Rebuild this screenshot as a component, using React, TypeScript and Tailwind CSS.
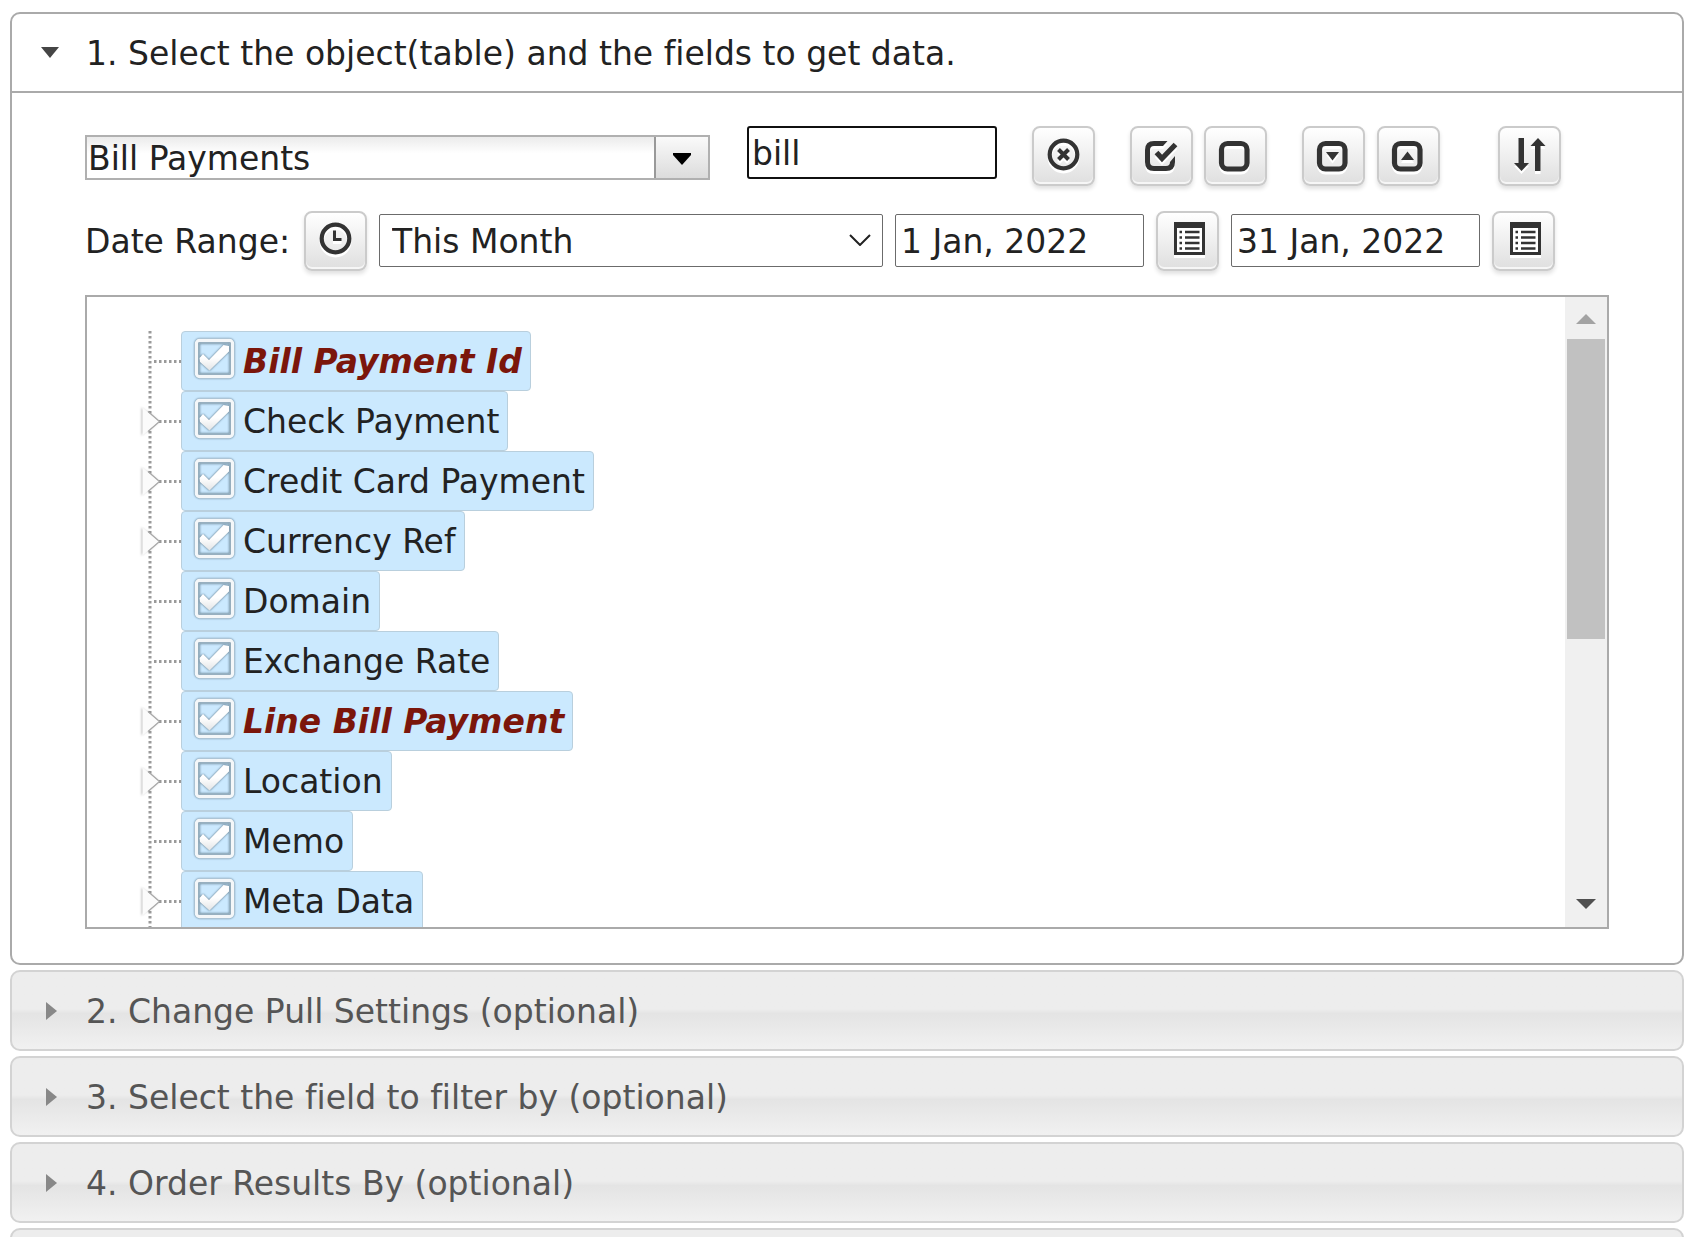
import React, { useState } from 'react';

interface Field {
  name: string;
  expandable?: boolean;
  key?: boolean;
}

const fields: Field[] = [
  { name: 'Bill Payment Id', key: true },
  { name: 'Check Payment', expandable: true },
  { name: 'Credit Card Payment', expandable: true },
  { name: 'Currency Ref', expandable: true },
  { name: 'Domain' },
  { name: 'Exchange Rate' },
  { name: 'Line Bill Payment', expandable: true, key: true },
  { name: 'Location', expandable: true },
  { name: 'Memo' },
  { name: 'Meta Data', expandable: true },
];

const sections = [
  '2. Change Pull Settings (optional)',
  '3. Select the field to filter by (optional)',
  '4. Order Results By (optional)',
];

interface IconButtonProps {
  label: string;
  className?: string;
  children: React.ReactNode;
}

function IconButton({ label, className = '', children }: IconButtonProps) {
  return (
    <button
      type="button"
      aria-label={label}
      className={`h-[60px] w-[63px] shrink-0 rounded-lg border-2 border-[#cbcbcb] bg-linear-to-b from-white to-[#dfdfdf] shadow-[inset_0_-2px_0_#f6f6f6,0_3px_4px_rgba(0,0,0,0.12)] ${className}`}
    >
      <svg viewBox="0 0 59 56" className="block h-full w-full drop-shadow-[0_3px_0_#ffffff]" fill="none" stroke="#333333">
        {children}
      </svg>
    </button>
  );
}

function CalendarIcon() {
  return (
    <>
      <path d="M17.5 12V40.5H45.5V12" strokeWidth="3" fill="#ffffff" />
      <path d="M16 9H47V15H16Z" fill="#333333" stroke="none" />
      <path d="M21.5 19H24M21.5 24.5H24M21.5 30H24M21.5 35.5H24M27 19H41.5M27 24.5H41.5M27 30H41.5M27 35.5H41.5" strokeWidth="2.6" />
    </>
  );
}

function RoundedBox() {
  return <rect x="15.5" y="15.5" width="25.5" height="25.5" rx="6" strokeWidth="5.2" />;
}

function TreeRow({ field }: { field: Field }) {
  const [checked, setChecked] = useState(true);

  return (
    <li className="flex h-[60px]">
      <div className="relative w-[41px] shrink-0">
        <svg viewBox="0 0 41 60" className="h-full w-full" fill="none" stroke="#9a9a9a" strokeWidth="3" strokeDasharray="2.5 2.5">
          <path d="M10 0V60" />
          <path d="M14 30.5H41" />
        </svg>
        {field.expandable && (
          <button type="button" aria-label={`Expand ${field.name}`} className="absolute top-[15px] left-0 h-8 w-5">
            <svg viewBox="0 0 20 32" className="h-full w-full overflow-visible drop-shadow-[-1px_0_1px_rgba(0,0,0,0.25)]">
              <path d="M2.5 1.5L19 15.5L2.5 29.5Z" fill="#fbfbfb" />
              <path d="M8 5.5L19.5 15.5L8 25.5" fill="none" stroke="#a8a8a8" strokeWidth="1.2" />
            </svg>
          </button>
        )}
      </div>
      <label className="flex h-[60px] items-center rounded border border-[#b9cfdd] bg-[#cbe9fe] pr-2 pl-3">
        <span className="relative mr-2 mb-[5px] block h-[41px] w-[41px] shrink-0">
          <input
            type="checkbox"
            checked={checked}
            onChange={() => setChecked(!checked)}
            className="absolute inset-0 h-full w-full appearance-none"
          />
          <svg viewBox="0 0 41 41" className="pointer-events-none absolute inset-0 h-full w-full drop-shadow-[0_0_1px_rgba(50,80,100,0.85)]" fill="none">
            <defs>
              <linearGradient id="tick" x1="0" y1="0" x2="0" y2="1">
                <stop offset="0.5" stopColor="#ffffff" />
                <stop offset="1" stopColor="#e2e4e6" />
              </linearGradient>
            </defs>
            <rect x="2.5" y="2.5" width="36" height="36" rx="3" stroke="#f4f7f9" strokeWidth="3.4" />
            <rect x="5" y="5" width="31" height="31" stroke="#9db6c5" strokeWidth="1.2" />
            {checked && (
              <path d="M5.5 20L9 16L15 22L29.5 7L35 8V13.5L15.5 32.5L6 24Z" fill="url(#tick)" />
            )}
          </svg>
        </span>
        <span className={field.key ? 'pt-[2px] font-bold text-[#7b160b] italic' : 'pt-[2px]'}>{field.name}</span>
      </label>
    </li>
  );
}

export default function App() {
  const [range, setRange] = useState('This Month');

  return (
    <main className="flex h-screen flex-col gap-[5px] overflow-hidden bg-white pt-3 pr-[11px] pl-[10px] font-['Verdana','DejaVu_Sans',sans-serif] text-[33px] leading-[40px] whitespace-nowrap text-[#222222] [font-variant-ligatures:none]">
      <section className="shrink-0 rounded-[10px] border-2 border-[#aaaaaa]">
        <h2 className="border-b-2 border-[#aaaaaa]">
          <button type="button" aria-expanded="true" className="flex h-[77px] w-full items-center">
            <svg viewBox="0 0 20 12" className="mr-[26px] ml-7 h-3 w-5" fill="#454545">
              <path d="M1 0H19L10 11Z" />
            </svg>
            <span className="pt-[2px]">1. Select the object(table) and the fields to get data.</span>
          </button>
        </h2>

        <div className="pt-[33px] pr-[73px] pb-[34px] pl-[73px]">
          <div className="flex">
            <div className="mt-[9px] mr-[37px] flex h-[45px] w-[625px] border-2 border-[#b0b0b0]">
              <input
                type="text"
                aria-label="Object"
                defaultValue="Bill Payments"
                className="min-w-0 flex-1 bg-linear-to-b from-[#ebebeb] to-white to-40% pt-[2px] pl-px outline-none"
              />
              <button
                type="button"
                aria-label="Show objects"
                className="flex w-[54px] items-center justify-center border-l-2 border-[#999999] bg-linear-to-b from-[#fafafa] to-[#dcdcdc] pt-[2px]"
              >
                <svg viewBox="0 0 18 12" className="h-3 w-[18px]" fill="#000000">
                  <path d="M0 0H18V2L9 12L0 2Z" />
                </svg>
              </button>
            </div>
            <input
              type="text"
              aria-label="Search fields"
              defaultValue="bill"
              className="mr-[35px] h-[53px] w-[250px] rounded-[3px] border-2 border-[#101010] pt-[2px] pl-[3px] outline-none"
            />
            <IconButton label="Clear search">
              <circle cx="29.5" cy="26.5" r="13.8" strokeWidth="4.2" />
              <path d="M24.5 21.5L34.5 31.5M34.5 21.5L24.5 31.5" strokeWidth="4" />
            </IconButton>
            <IconButton label="Check all" className="mr-[11px] ml-[35px]">
              <path
                d="M35.5 13L31 18H22Q18 18 18 22V34Q18 38 22 38H34Q38 38 38 34L43 28V34Q43 43 34 43H22Q13 43 13 34V22Q13 13 22 13Z"
                fill="#333333"
                stroke="none"
              />
              <path d="M24.5 24.5L30 30.5L43.5 16.5" strokeWidth="5.2" />
            </IconButton>
            <IconButton label="Uncheck all">
              <RoundedBox />
            </IconButton>
            <IconButton label="Expand all" className="mr-3 ml-[35px]">
              <RoundedBox />
              <path d="M22 24H35L28.5 32.5Z" fill="#333333" stroke="none" />
            </IconButton>
            <IconButton label="Collapse all">
              <RoundedBox />
              <path d="M22 32H35L28.5 23.5Z" fill="#333333" stroke="none" />
            </IconButton>
            <IconButton label="Sort" className="ml-[58px]">
              <path
                d="M18.5 10H24V35H29L21.5 43L14 35H18.5ZM35 43H40.5V18H45.5L38 10L30.5 18H35Z"
                fill="#333333"
                stroke="none"
              />
            </IconButton>
          </div>

          <div className="mt-[25px] flex items-start gap-3">
            <label htmlFor="range" className="mt-[11px] w-[207px]">Date Range:</label>
            <IconButton label="Refresh range">
              <circle cx="29.5" cy="25.5" r="13.8" strokeWidth="4.2" />
              <path d="M28.5 17.5V26.5H35.5" strokeWidth="3" />
            </IconButton>
            <div className="relative mt-[3px] h-[53px] w-[504px]">
              <select
                id="range"
                value={range}
                onChange={(e) => setRange(e.target.value)}
                className="h-full w-full appearance-none rounded-xs border border-[#6b6b6b] bg-white pt-[2px] pl-3"
              >
                <option>This Month</option>
              </select>
              <svg viewBox="0 0 22 12" className="pointer-events-none absolute top-5 right-3 h-3 w-[22px]" fill="none" stroke="#222222" strokeWidth="2">
                <path d="M1 1L11 11L21 1" />
              </svg>
            </div>
            <input
              type="text"
              aria-label="Start date"
              defaultValue="1 Jan, 2022"
              className="mt-[3px] h-[53px] w-[249px] rounded-xs border border-[#6b6b6b] pt-[2px] pl-[5px]"
            />
            <IconButton label="Pick start date">
              <CalendarIcon />
            </IconButton>
            <input
              type="text"
              aria-label="End date"
              defaultValue="31 Jan, 2022"
              className="mt-[3px] h-[53px] w-[249px] rounded-xs border border-[#6b6b6b] pt-[2px] pl-[5px]"
            />
            <IconButton label="Pick end date">
              <CalendarIcon />
            </IconButton>
          </div>

          <div className="mt-6 flex h-[634px] overflow-hidden border-2 border-[#aaaaaa]">
            <ul className="min-w-0 flex-1 pt-[34px] pl-[53px]">
              {fields.map((field) => (
                <TreeRow key={field.name} field={field} />
              ))}
            </ul>
            <div className="flex w-[42px] flex-col bg-[#f0f0f0]">
              <button type="button" aria-label="Scroll up" className="flex h-[42px] items-center justify-center">
                <svg viewBox="0 0 20 10" className="mt-[2px] h-[10px] w-5" fill="#a3a3a3">
                  <path d="M0 10L10 0L20 10Z" />
                </svg>
              </button>
              <div className="mx-[2px] h-[300px] bg-[#c1c1c1]" />
              <button type="button" aria-label="Scroll down" className="mt-auto flex h-[42px] items-center justify-center">
                <svg viewBox="0 0 20 10" className="mb-1 h-[10px] w-5" fill="#505050">
                  <path d="M0 0H20L10 10Z" />
                </svg>
              </button>
            </div>
          </div>
        </div>
      </section>

      {sections.map((title) => (
        <h2
          key={title}
          className="h-[81px] shrink-0 rounded-[10px] border-2 border-[#d3d3d3] bg-linear-to-b from-[#ededed] from-48% via-[#e4e4e4] via-54% to-[#f1f1f1] text-[#555555]"
        >
          <button type="button" aria-expanded="false" className="flex h-full w-full items-center">
            <svg viewBox="0 0 12 20" className="mr-[29px] ml-[33px] h-5 w-3" fill="#888888">
              <path d="M1 1L12 10L1 19Z" />
            </svg>
            <span className="pt-[2px]">{title}</span>
          </button>
        </h2>
      ))}
      <div className="h-[81px] shrink-0 rounded-[10px] border-2 border-[#d3d3d3] bg-[#ededed]" />
    </main>
  );
}
